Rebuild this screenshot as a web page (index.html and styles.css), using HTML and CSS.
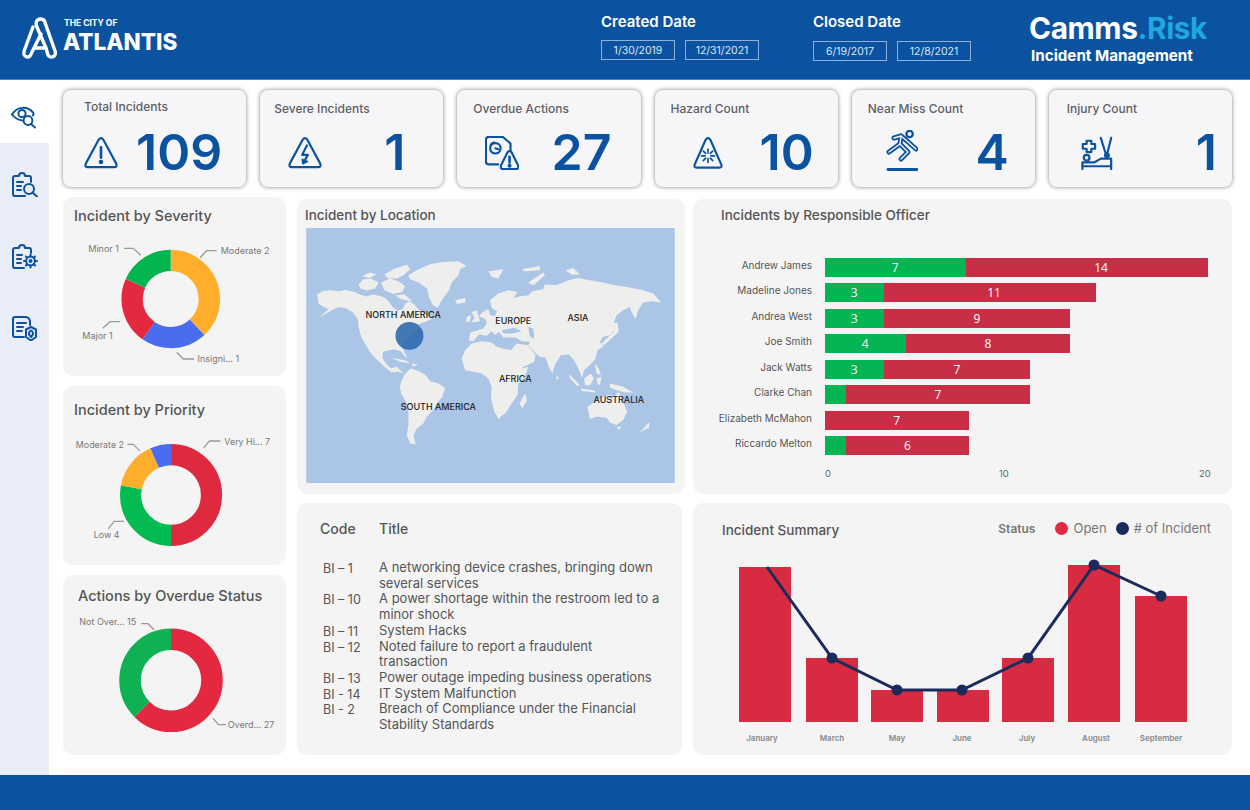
FILE: index.html
```html
<!DOCTYPE html>
<html lang="en">
<head>
    <meta charset="UTF-8">
    <title>Incident Management</title>
    <link rel="stylesheet" href="styles.css">
</head>
<body>
    <div class="app">
        <header class="header">
            <div class="logo">
                <svg class="logo-mark" viewBox="0 0 35 42">
                    <path d="M11 10 L2.5 33 Q0.5 39 5 40 Q8 40.5 9.5 36 L19 17"/>
                    <path d="M13 31 H24 L14.5 9 Q13 3 18 2 Q22.5 1.5 23.5 7 L33 34 A3.8 3.8 0 0 1 26 38 L24 31"/>
                </svg>
                <div class="logo-text">
                    <div class="logo-small">THE CITY OF</div>
                    <div class="logo-big">ATLANTIS</div>
                </div>
            </div>
            <div class="date-group date-created">
                <div class="date-title">Created Date</div>
                <div class="date-boxes">
                    <div class="date-box">1/30/2019</div>
                    <div class="date-box">12/31/2021</div>
                </div>
            </div>
            <div class="date-group date-closed">
                <div class="date-title">Closed Date</div>
                <div class="date-boxes">
                    <div class="date-box">6/19/2017</div>
                    <div class="date-box">12/8/2021</div>
                </div>
            </div>
            <div class="brand">
                <div class="brand-name">Camms<span class="brand-risk">.Risk</span></div>
                <div class="brand-sub">Incident Management</div>
            </div>
        </header>

        <div class="content">
            <nav class="sidebar">
                <div class="side-active">
                    <svg class="side-icon" viewBox="0 0 26 24">
                        <path d="M1 10 C6 2 16 1 22 8 Q23 9.5 22 11"/>
                        <path d="M1 10 Q5 15 11 16"/>
                        <circle cx="11" cy="9" r="3.6"/>
                        <circle cx="17" cy="16" r="4.4"/>
                        <path d="M20 19.5 L24 23"/>
                    </svg>
                </div>
                <div class="side-rest">
                    <svg class="side-icon" viewBox="0 0 26 25">
                        <path d="M13 24 H3 Q1 24 1 22 V6 Q1 4 3 4 H7 Q7 1 10 1 Q13 1 13 4 H17 Q19 4 19 6 V10"/>
                        <path d="M5 10 H11 M5 14 H9 M5 18 H9"/>
                        <circle cx="17" cy="17" r="5"/>
                        <path d="M20.5 20.5 L25 24.5"/>
                    </svg>
                    <svg class="side-icon" viewBox="0 0 26 25">
                        <path d="M12 24 H3 Q1 24 1 22 V6 Q1 4 3 4 H7 Q7 1 10 1 Q13 1 13 4 H17 Q19 4 19 6 V9"/>
                        <path d="M5 11 H10 M5 15 H9 M5 19 H9"/>
                        <circle cx="18.5" cy="17" r="4.4"/>
                        <circle class="solid" cx="18.5" cy="17" r="1"/>
                        <path d="M18.5 10.5 V12.5 M18.5 21.5 V23.5 M12 17 H14 M23 17 H25 M14 12.5 L15.3 13.8 M21.7 20.2 L23 21.5 M23 12.5 L21.7 13.8 M15.3 20.2 L14 21.5"/>
                    </svg>
                    <svg class="side-icon" viewBox="0 0 26 25">
                        <path d="M12 21 H3 Q1 21 1 19 V3 Q1 1 3 1 H13 Q17 1 18 5 V9"/>
                        <path d="M5 7 H14 M5 11 H11 M5 15 H10"/>
                        <path d="M19 24.5 L14 21 V13.5 L19 11 L24 13.5 V21 Z"/>
                        <path d="M19 21 Q16.5 18.5 17 17 Q18 14.5 19 14.5 Q20 14.5 21 17 Q21.5 18.5 19 21 Z"/>
                    </svg>
                </div>
            </nav>

            <main class="main">
                <section class="kpi-row">
                    <div class="kpi kpi-total">
                        <div class="kpi-label">Total Incidents</div>
                        <div class="kpi-body">
                            <svg class="kpi-icon" viewBox="0 0 36 36">
                                <path d="M15.5 4 Q18 0.5 20.5 4 L34 29 Q35.5 33 32 33 H4 Q0.5 33 2 29 Z"/>
                                <path d="M18 12 V23" stroke-width="2.8"/>
                                <circle class="solid" cx="18" cy="27.5" r="1.3"/>
                            </svg>
                            <div class="kpi-value">109</div>
                        </div>
                    </div>
                    <div class="kpi kpi-severe">
                        <div class="kpi-label">Severe Incidents</div>
                        <div class="kpi-body">
                            <svg class="kpi-icon" viewBox="0 0 36 36">
                                <path d="M15.5 4 Q18 0.5 20.5 4 L34 29 Q35.5 33 32 33 H4 Q0.5 33 2 29 Z"/>
                                <path d="M20 10 L15 20 H21 L16 29 M16 29 L15.5 25 M16 29 L20 27"/>
                            </svg>
                            <div class="kpi-value">1</div>
                        </div>
                    </div>
                    <div class="kpi kpi-overdue">
                        <div class="kpi-label">Overdue Actions</div>
                        <div class="kpi-body">
                            <svg class="kpi-icon" viewBox="0 0 36 36">
                                <path d="M14 30 H4 Q1 30 1 27 V4 Q1 1 4 1 H19 L27 8 V15"/>
                                <circle cx="11" cy="13" r="5.5"/>
                                <path d="M11 13 L14 14 M6 10 Q7 7 10 7"/>
                                <path d="M24 17 Q26 15 28 17 L35 31 Q36 35 33 35 H19 Q16 35 17 31 Z"/>
                                <path d="M26 22 V28" stroke-width="2.8"/>
                                <circle class="solid" cx="26" cy="31.5" r="1"/>
                            </svg>
                            <div class="kpi-value">27</div>
                        </div>
                    </div>
                    <div class="kpi kpi-hazard">
                        <div class="kpi-label">Hazard Count</div>
                        <div class="kpi-body">
                            <svg class="kpi-icon" viewBox="0 0 36 36">
                                <path d="M15.5 4 Q18 0.5 20.5 4 L32 30 Q33.5 33.5 30 33.5 H6 Q2.5 33.5 4 30 Z"/>
                                <path d="M18 14 V18 M18 24 V28 M11 21 H15 M21 21 H25 M13 16 L15.5 18.5 M20.5 23.5 L23 26 M23 16 L20.5 18.5 M15.5 23.5 L13 26" stroke-width="1.8"/>
                            </svg>
                            <div class="kpi-value">10</div>
                        </div>
                    </div>
                    <div class="kpi kpi-miss">
                        <div class="kpi-label">Near Miss Count</div>
                        <div class="kpi-body">
                            <svg class="kpi-icon kpi-icon-tall" viewBox="0 0 32 42">
                                <circle cx="23.6" cy="4" r="3.2"/>
                                <g class="limb-out">
                                    <path d="M8 8 L15 6 L21 11 L30 19"/>
                                    <path d="M15 6 L14 14 L3 22"/>
                                    <path d="M14 14 L22 22 L15 29"/>
                                </g>
                                <g class="limb-in">
                                    <path d="M8 8 L15 6 L21 11 L30 19"/>
                                    <path d="M15 6 L14 14 L3 22"/>
                                    <path d="M14 14 L22 22 L15 29"/>
                                </g>
                                <path d="M2 39.5 H31" stroke-width="2.8"/>
                            </svg>
                            <div class="kpi-value">4</div>
                        </div>
                    </div>
                    <div class="kpi kpi-injury">
                        <div class="kpi-label">Injury Count</div>
                        <div class="kpi-body">
                            <svg class="kpi-icon" viewBox="0 0 34 36">
                                <path d="M6 5 H11 V8.5 H15 V13.5 H11 V17 H6 V13.5 H2 V8.5 H6 Z"/>
                                <circle cx="6" cy="23" r="3"/>
                                <path d="M1.5 35 V28 H14 L21 24 H32 V35 M1.5 32 H32 M21 2 L26 18 M32 2 L28 18"/>
                                <circle class="solid" cx="27.5" cy="20.5" r="2"/>
                            </svg>
                            <div class="kpi-value">1</div>
                        </div>
                    </div>
                </section>

                <section class="panels">
                    <div class="donut-col">
                        <div class="card donut-card">
                            <h3 class="donut-title">Incident by Severity</h3>
                            <svg class="donut" viewBox="63 229 223 147">
                                <g transform="rotate(-90 170.7 299)" fill="none" stroke-width="21.3">
                                    <circle cx="170.7" cy="299" r="38.6" pathLength="360" stroke="#ffae2b" stroke-dasharray="137 360"/>
                                    <circle cx="170.7" cy="299" r="38.6" pathLength="360" stroke="#4a6cef" stroke-dasharray="78 360" stroke-dashoffset="-137"/>
                                    <circle cx="170.7" cy="299" r="38.6" pathLength="360" stroke="#e32840" stroke-dasharray="79 360" stroke-dashoffset="-215"/>
                                    <circle cx="170.7" cy="299" r="38.6" pathLength="360" stroke="#04b44f" stroke-dasharray="66 360" stroke-dashoffset="-294"/>
                                </g>
                                <polyline class="leader" points="124,248.3 133.3,248.3 140.7,255.3"/>
                                <polyline class="leader" points="200,257.7 206.7,250.7 216.7,250.7"/>
                                <polyline class="leader" points="120,321.7 110,321.7 102.7,328.3"/>
                                <polyline class="leader" points="176.7,352.3 183.3,359 194,359"/>
                                <text class="slice-label" x="88.3" y="252">Minor 1</text>
                                <text class="slice-label" x="220.7" y="254">Moderate 2</text>
                                <text class="slice-label" x="82.3" y="339">Major 1</text>
                                <text class="slice-label" x="197.5" y="362">Insigni... 1</text>
                            </svg>
                        </div>
                        <div class="card donut-card donut-card-priority">
                            <h3 class="donut-title">Incident by Priority</h3>
                            <svg class="donut" viewBox="63 418 223 147">
                                <g transform="rotate(-90 171 494)" fill="none" stroke-width="21.5">
                                    <circle cx="171" cy="494" r="41" pathLength="360" stroke="#de293f" stroke-dasharray="180 360"/>
                                    <circle cx="171" cy="494" r="41" pathLength="360" stroke="#03bb50" stroke-dasharray="101 360" stroke-dashoffset="-180"/>
                                    <circle cx="171" cy="494" r="41" pathLength="360" stroke="#ffae2b" stroke-dasharray="55 360" stroke-dashoffset="-281"/>
                                    <circle cx="171" cy="494" r="41" pathLength="360" stroke="#4a6cef" stroke-dasharray="24 360" stroke-dashoffset="-336"/>
                                </g>
                                <polyline class="leader" points="204,446.3 210,439.3 221,439.3"/>
                                <polyline class="leader" points="126.7,442.7 132.7,442.7 139.3,449.3"/>
                                <polyline class="leader" points="107.3,528.3 113.3,520.7 123.3,520.7"/>
                                <text class="slice-label" x="225" y="443">Very Hi... 7</text>
                                <text class="slice-label" x="74.5" y="446">Moderate 2</text>
                                <text class="slice-label" x="92.7" y="538">Low 4</text>
                            </svg>
                        </div>
                        <div class="card donut-card donut-card-overdue">
                            <h3 class="donut-title">Actions by Overdue Status</h3>
                            <svg class="donut" viewBox="63 608 223 147">
                                <g transform="rotate(-90 171 680.3)" fill="none" stroke-width="21.5">
                                    <circle cx="171" cy="680.3" r="41" pathLength="360" stroke="#e32840" stroke-dasharray="225 360"/>
                                    <circle cx="171" cy="680.3" r="41" pathLength="360" stroke="#10b152" stroke-dasharray="135 360" stroke-dashoffset="-225"/>
                                </g>
                                <polyline class="leader" points="141.3,623.7 148,623.7 154,629.7"/>
                                <polyline class="leader" points="213.3,718.3 218.3,724.7 226,724.7"/>
                                <text class="slice-label" x="79.3" y="625">Not Over... 15</text>
                                <text class="slice-label" x="227.7" y="728">Overd... 27</text>
                            </svg>
                        </div>
                    </div>

                    <div class="panel-grid">
                        <div class="card map-card">
                            <h3 class="map-title">Incident by Location</h3>
                            <svg class="map" viewBox="33 98 1107 766">
                                <rect class="sea" x="33" y="98" width="1107" height="766"/>
                                <g class="land">
                                    <!-- north america -->
                                    <path d="M66 298 L82 288 L105 284 L130 288 L150 284 L178 290 L195 298 L215 304 L232 298 L258 302 L275 312 L285 325 L295 338 L308 346 L322 342 L330 326 L342 318 L358 328 L372 345 L392 358 L412 370 L395 378 L375 385 L362 392 L378 396 L352 420 L338 428 L325 442 L322 460 L332 478 L336 490 L326 480 L318 468 L298 463 L280 465 L264 470 L262 488 L272 505 L288 520 L305 514 L312 522 L326 534 L308 530 L290 532 L270 516 L252 500 L236 484 L224 470 L212 450 L198 425 L190 395 L188 372 L172 350 L150 338 L128 336 L108 346 L84 360 L72 366 L100 342 L86 335 L70 325 Z"/>
                                    <path d="M190 268 L205 252 L228 250 L250 262 L240 280 L215 286 L196 280 Z"/>
                                    <path d="M258 262 L285 250 L310 258 L330 272 L322 290 L295 296 L268 285 Z"/>
                                    <path d="M268 238 L295 222 L335 208 L345 222 L325 240 L305 250 L278 250 Z"/>
                                    <path d="M200 242 L225 232 L245 238 L222 248 Z"/>
                                    <path d="M300 300 L328 298 L352 318 L338 316 L318 312 Z"/>
                                    <!-- greenland -->
                                    <path d="M340 240 L370 222 L405 207 L445 200 L490 198 L515 212 L495 222 L490 240 L470 262 L462 285 L440 315 L428 338 L412 328 L402 305 L396 280 L370 262 L345 252 Z"/>
                                    <!-- caribbean -->
                                    <path d="M290 488 L330 495 L345 505 L315 500 Z"/>
                                    <path d="M350 505 L370 508 L352 514 Z"/>
                                    <!-- south america -->
                                    <path d="M318 560 L330 535 L348 520 L372 528 L392 540 L405 558 L430 565 L450 578 L442 605 L425 625 L415 645 L395 665 L385 685 L365 700 L355 722 L362 748 L345 745 L335 720 L340 690 L340 655 L335 625 L318 595 L314 575 Z"/>
                                    <!-- africa -->
                                    <path d="M500 490 L510 465 L530 445 L560 438 L590 442 L605 455 L632 462 L655 465 L670 495 L685 520 L700 515 L690 545 L670 565 L668 600 L650 625 L635 650 L610 672 L598 650 L588 610 L590 575 L580 550 L560 535 L535 530 L510 525 Z"/>
                                    <path d="M690 595 L696 615 L682 640 L674 625 Z"/>
                                    <!-- eurasia -->
                                    <path d="M522 436 L526 412 L548 405 L565 400 L575 385 L572 372 L552 362 L562 352 L580 342 L586 360 L600 362 L606 348 L590 338 L585 315 L610 295 L640 285 L668 290 L655 308 L680 302 L700 300 L712 288 L745 282 L750 268 L785 270 L820 255 L850 248 L885 255 L925 262 L960 270 L1000 276 L1045 285 L1075 295 L1100 322 L1070 318 L1045 322 L1030 345 L1022 372 L1010 350 L1005 335 L985 345 L965 360 L958 380 L965 400 L945 420 L925 425 L915 440 L925 455 L908 465 L902 490 L885 510 L868 525 L862 548 L850 520 L838 495 L822 478 L798 480 L782 505 L772 535 L760 510 L752 488 L735 485 L728 480 L700 450 L705 440 L680 438 L665 428 L640 426 L625 428 L612 410 L600 420 L590 408 L575 422 L552 418 L535 438 Z"/>
                                    <path d="M665 445 L700 450 L722 480 L718 500 L680 518 L665 490 L650 462 Z"/>
                                    <path d="M530 350 L545 345 L555 378 L528 382 L538 368 Z"/>
                                    <path d="M515 365 L528 360 L525 378 L513 380 Z"/>
                                    <path d="M480 315 L510 308 L512 322 L486 326 Z"/>
                                    <path d="M945 420 L955 412 L963 395 L958 385 L968 382 L972 410 L950 430 L925 452 L920 445 Z"/>
                                    <path d="M785 540 L792 548 L785 555 Z"/>
                                    <path d="M700 262 L745 232 L750 240 L715 270 Z"/>
                                    <path d="M580 228 L625 222 L610 250 L590 245 Z"/>
                                    <path d="M680 222 L735 212 L735 225 L690 228 Z"/>
                                    <path d="M812 225 L835 218 L855 238 L830 238 Z"/>
                                    <!-- south east asia -->
                                    <path d="M825 538 L855 570 L845 572 L822 545 Z"/>
                                    <path d="M858 580 L900 586 L900 592 L860 588 Z"/>
                                    <path d="M868 550 L888 535 L897 550 L885 570 L870 570 Z"/>
                                    <path d="M905 550 L920 545 L915 570 L908 565 Z"/>
                                    <path d="M900 505 L912 520 L918 540 L905 535 Z"/>
                                    <path d="M945 565 L985 575 L1015 592 L990 592 L965 585 L945 578 Z"/>
                                    <!-- australia -->
                                    <path d="M878 635 L900 620 L925 605 L945 598 L950 612 L972 590 L985 620 L997 650 L985 675 L965 690 L945 682 L935 668 L905 665 L885 672 Z"/>
                                    <path d="M965 695 L980 695 L972 705 Z"/>
                                    <path d="M1035 712 L1065 680 L1062 698 Z"/>
                                </g>
                                <path class="sea" d="M620 405 L660 398 L680 408 L650 416 L625 414 Z"/>
                                <path class="sea" d="M700 395 L715 400 L718 430 L705 425 Z"/>
                                <circle cx="343" cy="422" r="42" fill="#2463ab" opacity="0.85"/>
                                <text class="map-label" x="211" y="367">NORTH AMERICA</text>
                                <text class="map-label" x="601" y="386">EUROPE</text>
                                <text class="map-label" x="818" y="377">ASIA</text>
                                <text class="map-label" x="612" y="560">AFRICA</text>
                                <text class="map-label" x="317" y="644">SOUTH AMERICA</text>
                                <text class="map-label" x="896" y="623">AUSTRALIA</text>
                            </svg>
                        </div>

                        <div class="card officer-card">
                            <h3 class="officer-title">Incidents by Responsible Officer</h3>
                            <div class="bars">
                                <div class="bar-name">Andrew James</div>
                                <div class="bar"><span class="seg seg-green" style="width:141.5px">7</span><span class="seg seg-red" style="width:242px;padding-left:28px">14</span></div>
                                <div class="bar-name">Madeline Jones</div>
                                <div class="bar"><span class="seg seg-green" style="width:59.5px">3</span><span class="seg seg-red" style="width:212px;padding-left:8px">11</span></div>
                                <div class="bar-name">Andrea West</div>
                                <div class="bar"><span class="seg seg-green" style="width:59.5px">3</span><span class="seg seg-red" style="width:186px">9</span></div>
                                <div class="bar-name">Joe Smith</div>
                                <div class="bar"><span class="seg seg-green" style="width:81.5px">4</span><span class="seg seg-red" style="width:164px">8</span></div>
                                <div class="bar-name">Jack Watts</div>
                                <div class="bar"><span class="seg seg-green" style="width:59.5px">3</span><span class="seg seg-red" style="width:146px">7</span></div>
                                <div class="bar-name">Clarke Chan</div>
                                <div class="bar"><span class="seg seg-green" style="width:21.5px"></span><span class="seg seg-red" style="width:184px">7</span></div>
                                <div class="bar-name">Elizabeth McMahon</div>
                                <div class="bar"><span class="seg seg-red" style="width:144.5px">7</span></div>
                                <div class="bar-name">Riccardo Melton</div>
                                <div class="bar"><span class="seg seg-green" style="width:21.5px"></span><span class="seg seg-red" style="width:123px">6</span></div>
                            </div>
                            <div class="axis">
                                <span>0</span>
                                <span>10</span>
                                <span>20</span>
                            </div>
                        </div>

                        <div class="card table-card">
                            <div class="table-head">
                                <div>Code</div>
                                <div>Title</div>
                            </div>
                            <div class="table-row"><div class="code">BI – 1</div><div>A networking device crashes, bringing down several services</div></div>
                            <div class="table-row"><div class="code">BI – 10</div><div>A power shortage within the restroom led to a minor shock</div></div>
                            <div class="table-row"><div class="code">BI – 11</div><div>System Hacks</div></div>
                            <div class="table-row"><div class="code">BI – 12</div><div>Noted failure to report a fraudulent transaction</div></div>
                            <div class="table-row"><div class="code">BI – 13</div><div>Power outage impeding business operations</div></div>
                            <div class="table-row"><div class="code">BI - 14</div><div>IT System Malfunction</div></div>
                            <div class="table-row"><div class="code">BI - 2</div><div>Breach of Compliance under the Financial Stability Standards</div></div>
                        </div>

                        <div class="card summary-card">
                            <div class="summary-head">
                                <h3 class="summary-title">Incident Summary</h3>
                                <div class="legend">
                                    <span class="legend-title">Status</span>
                                    <span class="legend-item"><i class="dot dot-red"></i>Open</span>
                                    <span class="legend-item"><i class="dot dot-navy"></i># of Incident</span>
                                </div>
                            </div>
                            <svg class="summary-chart" viewBox="693 555 539 200">
                                <g fill="#d62b41">
                                    <rect x="739" y="567" width="52" height="155"/>
                                    <rect x="806" y="658" width="52" height="64"/>
                                    <rect x="871" y="690" width="52" height="32"/>
                                    <rect x="937" y="690" width="52" height="32"/>
                                    <rect x="1002" y="658" width="52" height="64"/>
                                    <rect x="1068" y="565" width="52" height="157"/>
                                    <rect x="1135" y="596" width="52" height="126"/>
                                </g>
                                <polyline points="767,567 832,658 897,690 962,690 1028,658 1094,565 1161,596" fill="none" stroke="#1b2a5c" stroke-width="3"/>
                                <g fill="#1b2a5c">
                                    <circle cx="832" cy="658" r="5.5"/>
                                    <circle cx="897" cy="690" r="5.5"/>
                                    <circle cx="962" cy="690" r="5.5"/>
                                    <circle cx="1028" cy="658" r="5.5"/>
                                    <circle cx="1094" cy="565" r="5.5"/>
                                    <circle cx="1161" cy="596" r="5.5"/>
                                </g>
                                <g class="month">
                                    <text x="762" y="741">January</text>
                                    <text x="832" y="741">March</text>
                                    <text x="897" y="741">May</text>
                                    <text x="962" y="741">June</text>
                                    <text x="1027" y="741">July</text>
                                    <text x="1096" y="741">August</text>
                                    <text x="1161" y="741">September</text>
                                </g>
                            </svg>
                        </div>
                    </div>
                </section>
            </main>
        </div>

        <footer class="footer"></footer>
    </div>
</body>
</html>
```

FILE: styles.css
```css
* {
    margin: 0;
    padding: 0;
    box-sizing: border-box;
}

body {
    font-family: Inter, "Liberation Sans", sans-serif;
    background: #fff;
    color: #555;
}

.app {
    width: 1250px;
    height: 810px;
    display: flex;
    flex-direction: column;
    overflow: hidden;
}

/* header */
.header {
    height: 80px;
    background: #0b53a0;
    border-bottom: 1px solid #3f7fe0;
    display: flex;
    color: #fff;
}

.logo {
    width: 601px;
    padding: 17px 0 0 22px;
    display: flex;
    gap: 6px;
}

.logo-mark {
    width: 35px;
    height: 42px;
    fill: none;
    stroke: #fff;
    stroke-width: 3.4;
    stroke-linecap: round;
    stroke-linejoin: round;
}

.logo-small {
    font-size: 8.5px;
    font-weight: 700;
    padding-left: 1px;
    line-height: 12px;
}

.logo-big {
    font-size: 22.5px;
    font-weight: 800;
    line-height: 24px;
    margin-top: 1px;
}

.date-group {
    padding-top: 13px;
}

.date-created {
    width: 212px;
}

.date-closed {
    width: 216px;
}

.date-title {
    font-size: 15px;
    font-weight: 600;
    line-height: 18px;
}

.date-boxes {
    display: flex;
    gap: 10px;
    margin-top: 9px;
}

.date-closed .date-boxes {
    margin-top: 10px;
}

.date-box {
    width: 74px;
    height: 20px;
    border: 1px solid #8fb0d8;
    font-size: 10.5px;
    color: #dbe6f3;
    display: flex;
    align-items: center;
    justify-content: center;
}

.brand {
    padding-top: 14px;
}

.brand-name {
    font-size: 29.8px;
    font-weight: 700;
    line-height: 28px;
    letter-spacing: -0.4px;
}

.brand-risk {
    color: #1ea7e1;
}

.brand-sub {
    font-size: 15.2px;
    font-weight: 700;
    line-height: 16px;
    margin-top: 5.5px;
    padding-left: 2px;
}

/* body */
.content {
    flex: 1;
    display: flex;
}

.sidebar {
    width: 49px;
    background: #e9edf7;
    display: flex;
    flex-direction: column;
    align-items: center;
}

.side-active {
    width: 100%;
    height: 63px;
    background: #fff;
    padding: 24px 0 0 11px;
}

.side-rest {
    padding-top: 29px;
    display: flex;
    flex-direction: column;
    gap: 47px;
}

.side-icon {
    width: 26px;
    height: 25px;
    display: block;
    fill: none;
    stroke: #0b53a0;
    stroke-width: 2;
    stroke-linecap: round;
    stroke-linejoin: round;
}

.side-icon .solid {
    fill: #0b53a0;
}

.main {
    flex: 1;
    padding: 10px 18px 0 14px;
}

/* kpi cards */
.kpi-row {
    display: grid;
    grid-template-columns: repeat(6, 1fr);
    gap: 14px;
    height: 97px;
}

.kpi {
    background: #f6f6f9;
    border-radius: 8px;
    box-shadow: 0 0 4px rgba(0, 0, 0, 0.5);
}

.kpi-label {
    font-size: 12px;
    font-weight: 500;
    color: #5f5f63;
    line-height: 16px;
    padding-top: 11px;
    padding-left: 16px;
}

.kpi-body {
    height: 50px;
    margin-top: 10px;
    display: flex;
    align-items: center;
    justify-content: space-between;
}

.kpi-icon {
    width: 34px;
    height: 34px;
    margin-top: 2px;
    fill: none;
    stroke: #0b53a0;
    stroke-width: 2.3;
    stroke-linecap: round;
    stroke-linejoin: round;
}

.kpi-icon-tall {
    width: 32px;
    height: 42px;
    margin-top: -3px;
}

.kpi-icon .solid {
    fill: #0b53a0;
}

.limb-out {
    stroke-width: 5;
}

.limb-in {
    stroke: #f6f6f9;
    stroke-width: 1.4;
}

.kpi-value {
    font-size: 50px;
    font-weight: 600;
    color: #0b53a0;
    line-height: 50px;
}

.kpi-total .kpi-label { padding-left: 21px; padding-top: 9px; }
.kpi-total .kpi-body { padding: 0 24px 0 21px; margin-top: 12px; }
.kpi-severe .kpi-label { padding-left: 14px; }
.kpi-severe .kpi-body { padding: 0 38px 0 28px; }
.kpi-overdue .kpi-body { padding: 0 29px 0 28px; }
.kpi-hazard .kpi-body { padding: 0 24px 0 36px; }
.kpi-miss .kpi-body { padding: 0 26px 0 34px; }
.kpi-injury .kpi-label { padding-left: 18px; }
.kpi-injury .kpi-body { padding: 0 15px 0 31px; }

/* panels */
.card {
    background: #f4f4f4;
    border-radius: 10px;
}

.panels {
    display: flex;
    gap: 11px;
    margin-top: 10px;
}

.donut-col {
    width: 223px;
    display: flex;
    flex-direction: column;
    gap: 10px;
}

.donut-card {
    height: 179px;
    display: flex;
    flex-direction: column;
    justify-content: space-between;
}

.donut-card-overdue {
    height: 180px;
}

.donut-title {
    font-size: 14.5px;
    font-weight: 500;
    line-height: 20px;
    padding: 9px 0 0 11px;
}

.donut-card-priority .donut-title {
    padding-top: 14px;
}

.donut-card-overdue .donut-title {
    padding: 11px 0 0 15px;
}

.donut {
    width: 223px;
    height: 147px;
    display: block;
}

.leader {
    fill: none;
    stroke: #999;
    stroke-width: 1.3;
}

.slice-label {
    font-size: 9px;
    fill: #777;
}

.panel-grid {
    display: grid;
    grid-template-columns: 388px 539px;
    grid-template-rows: 295px 252px;
    column-gap: 8px;
    row-gap: 9px;
    margin-top: 2px;
}

/* map */
.map-card {
    padding: 8px 10px 0 9px;
}

.map-title {
    font-size: 13.5px;
    font-weight: 500;
    line-height: 17px;
    margin: 0 0 4px -1px;
}

.map {
    width: 369px;
    height: 255px;
    display: block;
}

.sea {
    fill: #abc5e6;
}

.land path {
    fill: #eeeeec;
}

.map-label {
    font-size: 27px;
    font-weight: 500;
    fill: #222;
}

/* officers */
.officer-title {
    font-size: 13.5px;
    font-weight: 500;
    line-height: 17px;
    padding: 8px 0 0 28px;
}

.bars {
    display: grid;
    grid-template-columns: 119px 1fr;
    column-gap: 12.5px;
    row-gap: 6.9px;
    grid-auto-rows: 18.6px;
    margin-top: 34px;
}

.bar-name {
    font-size: 10px;
    color: #555;
    text-align: right;
    line-height: 15px;
}

.bar {
    display: flex;
}

.seg {
    font-family: "Open Sans", sans-serif;
    font-size: 12px;
    color: #fff;
    display: flex;
    align-items: center;
    justify-content: center;
}

.seg-green {
    background: #03b553;
}

.seg-red {
    background: #c82f46;
}

.axis {
    display: grid;
    grid-template-columns: 174px 200px auto;
    margin: 13px 0 0 132px;
    font-size: 9.5px;
    color: #666;
    line-height: 12px;
}

/* table */
.table-card {
    margin-right: 3px;
    padding: 16px 0 0 26px;
    font-size: 13px;
    line-height: 15.7px;
    color: #555;
}

.table-head {
    display: grid;
    grid-template-columns: 59px auto;
    margin: 0 0 21px -3px;
    font-size: 14px;
    font-weight: 500;
    line-height: 20px;
}

.table-row {
    display: grid;
    grid-template-columns: 56px 282px;
}

.code {
    font-size: 12.5px;
    padding-top: 1px;
    margin-bottom: -1px;
}

/* summary */
.summary-card {
    display: flex;
    flex-direction: column;
    justify-content: space-between;
}

.summary-head {
    display: flex;
    justify-content: space-between;
    padding: 17px 21px 0 29px;
}

.summary-title {
    font-size: 13.5px;
    font-weight: 500;
    line-height: 20px;
}

.legend {
    display: flex;
    align-items: center;
    gap: 18px;
    font-size: 13px;
    color: #777;
    height: 16px;
}

.legend-title {
    font-weight: 600;
    font-size: 12px;
    margin-right: 2px;
}

.legend-item {
    display: flex;
    align-items: center;
    gap: 5px;
}

.legend-item + .legend-item {
    margin-left: -9px;
}

.dot {
    width: 13px;
    height: 13px;
    border-radius: 50%;
}

.dot-red {
    background: #e32840;
}

.dot-navy {
    background: #1b2a5c;
}

.summary-chart {
    width: 539px;
    height: 200px;
    display: block;
}

.month text {
    font-size: 8px;
    font-weight: 600;
    fill: #888;
    text-anchor: middle;
}

.footer {
    height: 35px;
    background: #0b53a0;
}
```
